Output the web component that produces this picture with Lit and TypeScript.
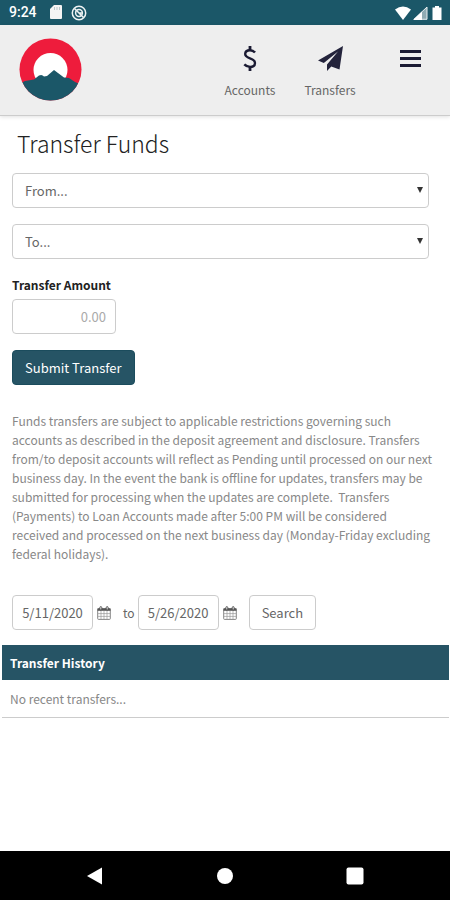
import { LitElement, html, css, svg } from "lit";
import { customElement } from "lit/decorators.js";

const calendar = svg`<svg class="cal" viewBox="0 0 14 14" width="14" height="14" aria-hidden="true">
  <rect x="0.7" y="2.6" width="12.6" height="10.8" rx="0.8" fill="#fff" stroke="#777" stroke-width="0.9"/>
  <path d="M0.5 2.4h13v2.4h-13z" fill="#555"/>
  <path d="M1 7.6h12M1 10.4h12M4 5v8M7 5v8M10 5v8" stroke="#999" stroke-width="0.7"/>
  <rect x="2.8" y="0.6" width="2" height="3.4" rx="1" fill="#ddd" stroke="#444" stroke-width="0.8"/>
  <rect x="9.2" y="0.6" width="2" height="3.4" rx="1" fill="#ddd" stroke="#444" stroke-width="0.8"/>
</svg>`;

@customElement("app-root")
export class AppRoot extends LitElement {
  static styles = css`
    :host {
      display: flex;
      flex-direction: column;
      min-height: 100vh;
      background: #fff;
      color: #666;
      font: 13px/19px "Noto Sans CJK SC", "Noto Sans", sans-serif;
    }
    * { box-sizing: border-box; }
    button, input, select { font: inherit; color: inherit; margin: 0; }
    svg { display: block; flex: none; }
    .status {
      display: flex;
      align-items: center;
      height: 25px;
      padding: 0 6px 0 9px;
      background: #1b5768;
      color: #fff;
      font: 500 14px/25px Roboto, sans-serif;
    }
    .status .left { margin-left: 13px; display: flex; gap: 9px; }
    .status .right { margin-left: auto; display: flex; gap: 2px; }
    header {
      display: flex;
      align-items: flex-start;
      height: 91px;
      padding: 13px 29px 0 19px;
      background: #eee;
      border-bottom: 1px solid #ccc;
      box-shadow: 0 1px 4px #0000001f;
    }
    nav { display: flex; margin-left: auto; gap: 20px; }
    nav a {
      display: flex;
      flex-direction: column;
      align-items: center;
      width: 60px;
      padding-top: 8px;
      gap: 9px;
      font-size: 12px;
      line-height: 20px;
      color: #666;
      text-decoration: none;
    }
    .menu {
      margin-left: 40px;
      padding: 11px 0 0;
      border: 0;
      background: none;
    }
    main { flex: 1; }
    .form { padding: 12px 21px 0 12px; }
    h1 {
      margin: 0 0 15px;
      padding-left: 5px;
      font-size: 23px;
      line-height: 30px;
      font-weight: 300;
      color: #222;
    }
    .field, .btn {
      display: block;
      height: 35px;
      border: 1px solid #ccc;
      border-radius: 4px;
      background: #fff;
      padding: 0 12px;
    }
    .select { position: relative; margin-bottom: 16px; }
    .select select { width: 100%; appearance: none; }
    .select svg { position: absolute; right: 6px; top: 14px; pointer-events: none; }
    label.amount { display: block; margin-bottom: 5px; font-size: 12px; font-weight: 700; color: #222; }
    .money { width: 104px; padding: 0 9px; text-align: right; }
    .money::placeholder { color: #aaa; opacity: 1; }
    .submit {
      margin-top: 16px;
      background: #265465;
      border-color: #1b4c5d;
      color: #fff;
    }
    .note { margin: 26px 14px 32px 12px; font-size: 12px; color: #888; }
    .search { display: flex; align-items: center; padding: 0 12px; }
    .date { width: 81px; padding: 0; text-align: center; }
    .cal { margin-left: 4px; }
    .to { margin: 0 3px 0 12px; font-size: 12px; }
    .search .btn { margin-left: 12px; }
    table { width: calc(100% - 3px); margin: 15px 1px 0 2px; border-collapse: collapse; font-size: 12px; }
    th, td { height: 35px; padding: 0 8px; text-align: left; }
    th { background: #265465; color: #fff; font-weight: 700; }
    td { height: 37px; color: #888; border-bottom: 1px solid #ccc; }
    .keys {
      display: flex;
      align-items: center;
      justify-content: space-around;
      height: 49px;
      padding: 0 30px;
      background: #000;
    }
    .keys button { padding: 0; border: 0; background: none; }
  `;

  render() {
    return html`
      <div class="status">
        <span>9:24</span>
        <div class="left">
          <svg width="12" height="14" viewBox="0 0 12 14"><path d="M4 0h7a1 1 0 0 1 1 1v12a1 1 0 0 1-1 1H1a1 1 0 0 1-1-1V4z" fill="#f4f4f4"/><path d="M4.500 2v3M7 2v3M9.500 2v3" stroke="#b9c8cc"/></svg>
          <svg width="16" height="16" viewBox="0 0 16 16" fill="none" stroke="#eef3f4" stroke-width="1.500"><circle cx="8" cy="8" r="6.700"/><circle cx="8" cy="8" r="3.400"/><path d="M3.500 3.500l9 9M8 8h4"/></svg>
        </div>
        <div class="right">
          <svg width="16" height="14" viewBox="0 0 16 14"><path d="M8 14L0 3.500Q8-2.500 16 3.500z" fill="#fff"/></svg>
          <svg width="15" height="14" viewBox="0 0 15 14"><path d="M14 1v12.300H1z" fill="#8fabb3" stroke="#e8eef0"/><path d="M0 14L9 5.500V14z" fill="#fff"/></svg>
          <svg width="14" height="14" viewBox="0 0 14 14"><path d="M5 0h4v1.500h2.500V14h-9V1.500H5z" fill="#fff"/></svg>
        </div>
      </div>
      <header>
        <svg width="63" height="63" viewBox="0 0 63 63" role="img" aria-label="Home">
          <defs><clipPath id="disc"><circle cx="31.500" cy="31.500" r="31"/></clipPath></defs>
          <g clip-path="url(#disc)">
            <rect width="63" height="63" fill="#ee1c3c"/>
            <circle cx="31.500" cy="32" r="17" fill="#fff"/>
            <path d="M0 46L6 43l9-1.500 5-4q3-1.500 5 1l3-.5 7-6 10 7.500 5 .5 6 4 7 3v18H0z" fill="#1b5768"/>
          </g>
        </svg>
        <nav>
          <a href="#accounts">
            <svg width="14" height="25" viewBox="0 0 14 25" fill="none" stroke="#1b1b33"><path d="M7 0v4M7 21v4" stroke-width="2.800"/><path d="M12 6.500C10.500 4.800 9 4.200 7 4.200 4.200 4.200 2.200 5.700 2.200 8c0 5.400 9.800 3.200 9.800 9 0 2.500-2 3.900-4.900 3.900-2.300 0-4.200-.8-5.800-2.500" stroke-width="2.400"/></svg>
            Accounts
          </a>
          <a href="#transfers">
            <svg width="25" height="25" viewBox="0 0 25 25"><path d="M25 0L0 14.500l5.800 2.600L20 5.500 9 18.500V25l4.300-4.600 8.200 3z" fill="#23233b"/></svg>
            Transfers
          </a>
        </nav>
        <button class="menu" aria-label="Menu">
          <svg width="21" height="20" viewBox="0 0 21 20"><path d="M0 2.500h21M0 9.500h21M0 16.500h21" stroke="#1b1b33" stroke-width="3"/></svg>
        </button>
      </header>
      <main>
        <div class="form">
          <h1>Transfer Funds</h1>
          ${["From...", "To..."].map(
            (label) => html`<div class="select">
              <select class="field" aria-label=${label}><option>${label}</option></select>
              <svg width="6" height="6" viewBox="0 0 6 6"><path d="M0 0h6L3 6z" fill="#333"/></svg>
            </div>`
          )}
          <label class="amount" for="amount">Transfer Amount</label>
          <input id="amount" class="field money" placeholder="0.00" />
          <button class="btn submit">Submit Transfer</button>
        </div>
        <p class="note">Funds transfers are subject to applicable restrictions governing such accounts as described in the deposit agreement and disclosure. Transfers from/to deposit accounts will reflect as Pending until processed on our next business day. In the event the bank is offline for updates, transfers may be submitted for processing when the updates are complete.&nbsp; Transfers (Payments) to Loan Accounts made after 5:00 PM will be considered received and processed on the next business day (Monday-Friday excluding federal holidays).</p>
        <div class="search">
          <input class="field date" aria-label="Start date" value="5/11/2020" />
          ${calendar}
          <label class="to" for="end">to</label>
          <input id="end" class="field date" value="5/26/2020" />
          ${calendar}
          <button class="btn">Search</button>
        </div>
        <table>
          <thead><tr><th>Transfer History</th></tr></thead>
          <tbody><tr><td>No recent transfers...</td></tr></tbody>
        </table>
      </main>
      <div class="keys">
        <button aria-label="Back"><svg width="18" height="18" viewBox="0 0 18 18"><path d="M1 9L16 .5v17z" fill="#fff"/></svg></button>
        <button aria-label="Home"><svg width="18" height="18" viewBox="0 0 18 18"><circle cx="9" cy="9" r="8" fill="#fff"/></svg></button>
        <button aria-label="Recent"><svg width="18" height="18" viewBox="0 0 18 18"><rect x=".5" y=".5" width="17" height="17" rx="2" fill="#fff"/></svg></button>
      </div>
    `;
  }
}
